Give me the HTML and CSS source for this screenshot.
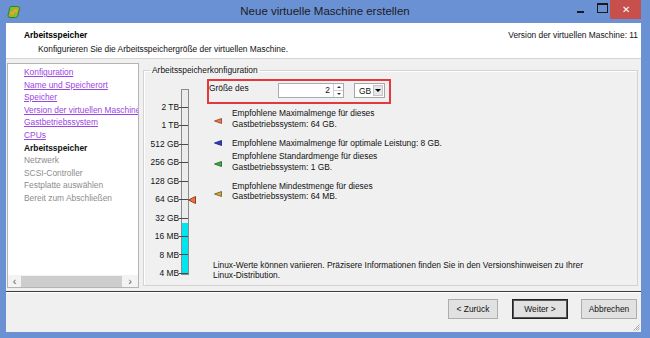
FILE: index.html
```html
<!DOCTYPE html>
<html lang="de">
  <head>
    <meta charset="UTF-8" />
    <title>Neue virtuelle Maschine erstellen</title>
    <link rel="stylesheet" href="styles.css">
  </head>
  <body>
    <div class="window">
      <!-- Titelleiste -->
      <div class="titlebar">
        <div class="titlebar-left">
          <svg class="app-icon" viewBox="0 0 14 14">
            <path d="M4 1.5h6.5a2 2 0 0 1 2 2L11 10a2.5 2.5 0 0 1-2.5 2.5H3a2 2 0 0 1-2-2L2.5 4A2.5 2.5 0 0 1 4 1.5z" fill="#7dbf3f" stroke="#3f7d1c" stroke-width="1"/>
            <rect x="3.5" y="6.5" width="3.5" height="3.5" fill="#f6a21e"/>
            <rect x="7" y="4" width="3.5" height="3.5" fill="#f6a21e"/>
          </svg>
        </div>
        <div class="title">Neue virtuelle Maschine erstellen</div>
        <div class="controls">
          <span class="ctl ctl-min"></span>
          <span class="ctl ctl-max"></span>
          <span class="ctl ctl-close">✕</span>
        </div>
      </div>

      <div class="frame">
        <div class="dialog">
          <!-- Kopfbereich -->
          <div class="header">
            <div class="header-text">
              <div class="page-title">Arbeitsspeicher</div>
              <div class="page-subtitle">Konfigurieren Sie die Arbeitsspeichergröße der virtuellen Maschine.</div>
            </div>
            <div class="vm-version">Version der virtuellen Maschine: 11</div>
          </div>

          <div class="main">
            <!-- Schritte des Assistenten -->
            <div class="steps">
              <ul class="step-list">
                <li class="step"><a href="#">Konfiguration</a></li>
                <li class="step"><a href="#">Name und Speicherort</a></li>
                <li class="step"><a href="#">Speicher</a></li>
                <li class="step"><a href="#">Version der virtuellen Maschine</a></li>
                <li class="step"><a href="#">Gastbetriebssystem</a></li>
                <li class="step"><a href="#">CPUs</a></li>
                <li class="step current">Arbeitsspeicher</li>
                <li class="step pending">Netzwerk</li>
                <li class="step pending">SCSI-Controller</li>
                <li class="step pending">Festplatte auswählen</li>
                <li class="step pending">Bereit zum Abschließen</li>
              </ul>
              <div class="hscroll">
                <span class="hscroll-arrow">‹</span>
                <span class="hscroll-thumb"></span>
                <span class="hscroll-arrow">›</span>
              </div>
            </div>

            <!-- Arbeitsspeicherkonfiguration -->
            <fieldset class="group">
              <legend>Arbeitsspeicherkonfiguration</legend>

              <div class="scale">
                <div class="scale-labels">
                  <span>2 TB</span>
                  <span>1 TB</span>
                  <span>512 GB</span>
                  <span>256 GB</span>
                  <span>128 GB</span>
                  <span>64 GB</span>
                  <span>32 GB</span>
                  <span>16 MB</span>
                  <span>8 MB</span>
                  <span>4 MB</span>
                </div>
                <div class="track">
                  <span class="tick"></span>
                  <span class="tick"></span>
                  <span class="tick"></span>
                  <span class="tick"></span>
                  <span class="tick"></span>
                  <span class="tick"></span>
                  <span class="tick"></span>
                  <span class="tick"></span>
                  <span class="tick"></span>
                  <span class="tick"></span>
                  <svg class="marker" viewBox="0 0 8 8">
                    <polygon points="0.5,4 7.5,0.5 7.5,7.5" fill="#f47141" stroke="#93401d" stroke-width="1"/>
                  </svg>
                </div>
              </div>

              <div class="config">
                <div class="size-box">
                  <span class="size-label">Größe des</span>
                  <div class="spin">
                    <span class="spin-value">2</span>
                    <span class="spin-buttons">
                      <span class="spin-up"></span>
                      <span class="spin-down"></span>
                    </span>
                  </div>
                  <div class="unit-select">
                    <span>GB</span>
                    <span class="select-arrow"></span>
                  </div>
                </div>

                <ul class="legend-list">
                  <li class="legend-item">
                    <svg class="legend-icon" viewBox="0 0 8 6"><polygon points="0.5,3 7.5,0.5 7.5,5.5" fill="#f07a48" stroke="#8d3b1c" stroke-width="0.8"/></svg>
                    <span>Empfohlene Maximalmenge für dieses<br>Gastbetriebssystem: 64 GB.</span>
                  </li>
                  <li class="legend-item single">
                    <svg class="legend-icon" viewBox="0 0 8 6"><polygon points="0.5,3 7.5,0.5 7.5,5.5" fill="#2b3fd6" stroke="#101a70" stroke-width="0.8"/></svg>
                    <span>Empfohlene Maximalmenge für optimale Leistung: 8 GB.</span>
                  </li>
                  <li class="legend-item">
                    <svg class="legend-icon" viewBox="0 0 8 6"><polygon points="0.5,3 7.5,0.5 7.5,5.5" fill="#3fae3f" stroke="#1d5e1d" stroke-width="0.8"/></svg>
                    <span>Empfohlene Standardmenge für dieses<br>Gastbetriebssystem: 1 GB.</span>
                  </li>
                  <li class="legend-item">
                    <svg class="legend-icon" viewBox="0 0 8 6"><polygon points="0.5,3 7.5,0.5 7.5,5.5" fill="#d2a93a" stroke="#6d5416" stroke-width="0.8"/></svg>
                    <span>Empfohlene Mindestmenge für dieses<br>Gastbetriebssystem: 64 MB.</span>
                  </li>
                </ul>

                <p class="note">Linux-Werte können variieren. Präzisere Informationen finden Sie in den Versionshinweisen zu Ihrer<br>Linux-Distribution.</p>
              </div>
            </fieldset>
          </div>

          <!-- Schaltflächen -->
          <div class="footer">
            <button class="btn btn-back">&lt; Zurück</button>
            <button class="btn btn-next">Weiter &gt;</button>
            <button class="btn btn-cancel">Abbrechen</button>
            <svg class="grip" viewBox="0 0 8 8">
              <path d="M7.5 1.5 1.5 7.5M7.5 3.5 3.5 7.5M7.5 5.5 5.5 7.5" stroke="#9a9a9a" stroke-width="0.8"/>
            </svg>
          </div>
        </div>
      </div>
    </div>
  </body>
</html>
```

FILE: styles.css
```css
/* ======= Variablen ======= */
:root {
  --font-family: "Liberation Sans", Arial, sans-serif;
  --font-size: 8.4px;
  --color-frame: #6a91d4;
  --color-dialog: #f0f0f0;
  --color-text: #111;
  --color-link: #9b45e4;
  --color-disabled: #8d8d8d;
  --color-highlight: #e3393e;
  --color-border: #adadad;
  --color-level: #00e6ef;
}

/* ======= Globale Stile ======= */
* {
  box-sizing: border-box;
  margin: 0;
  padding: 0;
}

body {
  font-family: var(--font-family);
  font-size: var(--font-size);
  color: var(--color-text);
  background-color: var(--color-frame);
}

ul {
  list-style: none;
}

/* ======= Fenster ======= */
.window {
  width: 650px;
  height: 338px;
  display: flex;
  flex-direction: column;
  background-color: var(--color-frame);
}

.titlebar {
  height: 23px;
  flex: none;
  display: grid;
  grid-template-columns: 1fr auto 1fr;
  align-items: start;
}

.titlebar-left {
  padding: 5px 0 0 7px;
}

.app-icon {
  display: block;
  width: 14px;
  height: 14px;
}

.title {
  font-size: 11.5px;
  line-height: 23px;
  color: #1c1c1c;
}

.controls {
  display: flex;
  justify-content: flex-end;
  margin-right: 9px;
}

.ctl {
  height: 19px;
  display: flex;
  align-items: center;
  justify-content: center;
}

.ctl-min {
  width: 28px;
}

.ctl-min::before {
  content: "";
  width: 7px;
  height: 2px;
  margin-top: 5px;
  background-color: #1a1a1a;
}

.ctl-max {
  width: 16px;
}

.ctl-max::before {
  content: "";
  width: 9px;
  height: 7px;
  margin-top: -3px;
  border: 1px solid #1a1a1a;
  border-top-width: 2px;
}

.ctl-close {
  width: 31px;
  background-color: #c7504c;
  color: #fff;
  font-size: 10px;
}

.frame {
  flex: 1;
  display: flex;
  padding: 0 9px 6px 6px;
}

.dialog {
  flex: 1;
  display: flex;
  flex-direction: column;
  background-color: var(--color-dialog);
}

/* ======= Kopfbereich ======= */
.header {
  height: 36px;
  flex: none;
  display: flex;
  justify-content: space-between;
  padding: 6px 3px 0 18px;
  background-color: #fff;
  border-bottom: 1px solid #d5d5d5;
}

.page-title {
  font-weight: bold;
  line-height: 12px;
  color: #000;
}

.page-subtitle {
  margin-top: 2px;
  padding-left: 14px;
  line-height: 12px;
}

.vm-version {
  line-height: 12px;
}

/* ======= Hauptbereich ======= */
.main {
  flex: 1;
  display: flex;
  padding: 4px 3px 3px 1px;
}

.steps {
  width: 132px;
  flex: none;
  display: flex;
  flex-direction: column;
  background-color: #fff;
  border: 1px solid #b4b4b4;
  overflow: hidden;
  white-space: nowrap;
}

.step-list {
  flex: 1;
  padding: 2px 0 0 16px;
  line-height: 12.6px;
}

.step a {
  color: var(--color-link);
  text-decoration: underline;
}

.step.current {
  font-weight: bold;
  color: #111;
}

.step.pending {
  color: var(--color-disabled);
}

.hscroll {
  height: 12px;
  display: flex;
  align-items: center;
  background-color: #f3f3f3;
}

.hscroll-arrow {
  width: 13px;
  text-align: center;
  font-size: 11px;
  line-height: 12px;
  color: #606060;
}

.hscroll-arrow:last-child {
  flex: 1;
}

.hscroll-thumb {
  width: 101px;
  height: 11px;
  background-color: #cdcdcd;
}

/* ======= Gruppe Arbeitsspeicher ======= */
.group {
  flex: 1;
  min-width: 0;
  display: flex;
  margin: 2px 0 2px 4px;
  padding: 0;
  border: 1px solid #d3d3d3;
  box-shadow: inset 1px 1px 0 #fff;
}

.group legend {
  margin-left: 6px;
  padding: 0 2px;
  line-height: 10px;
}

.scale {
  display: flex;
  align-items: flex-start;
  margin-top: 14px;
}

.scale-labels {
  width: 35px;
  margin-top: 8.5px;
  display: flex;
  flex-direction: column;
  text-align: right;
}

.scale-labels span {
  height: 18.5px;
  line-height: 18.5px;
}

.track {
  position: relative;
  width: 8px;
  height: 186px;
  margin-left: 2px;
  padding-top: 16.7px;
  display: flex;
  flex-direction: column;
  gap: 17.48px;
  border: 1px solid #8a8a8a;
  background: linear-gradient(to top, var(--color-level) 51px, #ececec 51px);
}

.tick {
  flex: none;
  width: 9px;
  height: 1px;
  margin-left: -3px;
  background-color: #4a4a4a;
}

.marker {
  position: absolute;
  left: 100%;
  top: 106px;
  width: 8px;
  height: 8px;
}

.config {
  flex: 1;
  display: flex;
  flex-direction: column;
  margin: 4px 0 4.5px 18px;
}

.size-box {
  width: 184px;
  height: 25px;
  display: flex;
  align-items: flex-start;
  padding-top: 1px;
  border: 2px solid var(--color-highlight);
}

.size-label {
  width: 69px;
  line-height: 12px;
}

.spin {
  width: 66px;
  height: 15px;
  margin-top: 1px;
  display: flex;
  background-color: #fff;
  border: 1px solid #a5acb5;
}

.spin-value {
  flex: 1;
  text-align: right;
  padding-right: 3px;
  line-height: 13px;
}

.spin-buttons {
  width: 10px;
  display: flex;
  flex-direction: column;
  border-left: 1px solid #d0d0d0;
}

.spin-up,
.spin-down {
  flex: 1;
  display: flex;
  align-items: center;
  justify-content: center;
}

.spin-up {
  border-bottom: 1px solid #d0d0d0;
}

.spin-up::before {
  content: "";
  border: 2px solid transparent;
  border-top: none;
  border-bottom: 2px solid #333;
}

.spin-down::before {
  content: "";
  border: 2px solid transparent;
  border-bottom: none;
  border-top: 2px solid #333;
}

.unit-select {
  width: 31px;
  height: 15px;
  margin: 1px 0 0 10px;
  display: flex;
  align-items: center;
  padding: 0 1px 0 4px;
  background-color: #fff;
  border: 1px solid #a5a5a5;
}

.select-arrow {
  margin-left: auto;
  width: 10px;
  height: 11px;
  display: flex;
  align-items: center;
  justify-content: center;
  background-color: #e6e6e6;
  border: 1px solid #c4c4c4;
}

.select-arrow::before {
  content: "";
  border: 3px solid transparent;
  border-bottom: none;
  border-top: 3px solid #000;
}

.legend-list {
  margin-top: 4px;
}

.legend-item {
  display: flex;
  align-items: flex-start;
  padding-left: 7px;
  line-height: 10.5px;
}

.legend-item + .legend-item {
  margin-top: 8.5px;
}

.legend-item.single + .legend-item {
  margin-top: 3px;
}

.legend-icon {
  flex: none;
  width: 8px;
  height: 6px;
  margin: 10px 10px 0 0;
}

.legend-item.single .legend-icon {
  margin-top: 2.5px;
}

.note {
  margin: auto 0 0 6px;
  line-height: 10.5px;
}

/* ======= Schaltflächen ======= */
.footer {
  position: relative;
  height: 41px;
  flex: none;
  display: flex;
  justify-content: flex-end;
  align-items: flex-start;
  padding: 7px 4px 0 0;
  border-top: 1px solid #3b3b3b;
  box-shadow: inset 0 1px 0 #fff;
}

.btn {
  height: 20px;
  font-family: var(--font-family);
  font-size: var(--font-size);
  color: var(--color-text);
  background-color: #e1e1e1;
  border: 1px solid var(--color-border);
}

.btn-back {
  width: 50px;
}

.btn-next {
  width: 56px;
  margin-left: 14px;
  border-color: #222;
  box-shadow: inset 0 0 0 1px #555;
}

.btn-cancel {
  width: 56px;
  margin-left: 13px;
}

.grip {
  position: absolute;
  right: 1px;
  bottom: 1px;
  width: 8px;
  height: 8px;
}
```
